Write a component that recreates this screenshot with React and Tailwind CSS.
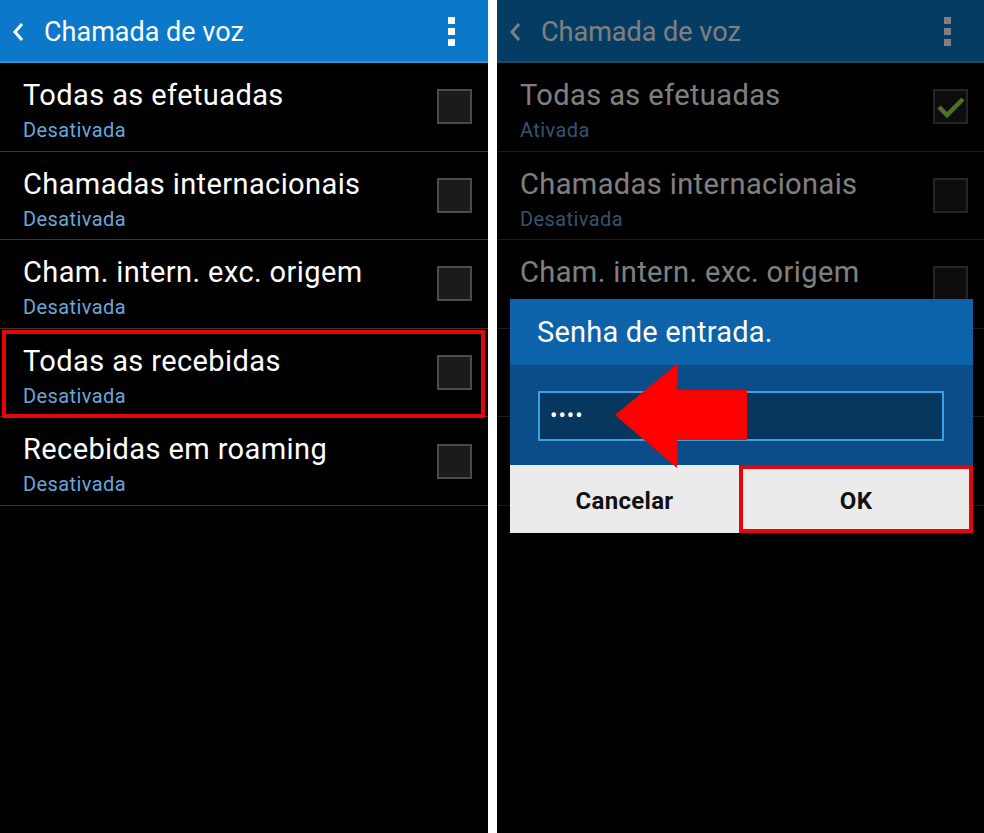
import React from 'react';

const rows = [
    { title: 'Todas as efetuadas', status: 'Desativada' },
    { title: 'Chamadas internacionais', status: 'Desativada' },
    { title: 'Cham. intern. exc. origem', status: 'Desativada' },
    { title: 'Todas as recebidas', status: 'Desativada' },
    { title: 'Recebidas em roaming', status: 'Desativada' },
];

function Header() {
    return (
        <div className="h-[63px] flex items-center justify-between bg-[#0b78c9] border-b-2 border-[#3591d6]">
            <div className="flex items-center">
                <svg width="14" height="20" viewBox="0 0 14 20" className="ml-[12px] mr-[18px] mt-[2px]">
                    <polyline points="10,2 3,10 10,18" fill="none" stroke="#fff" strokeWidth="3" />
                </svg>
                <span className="text-[27px] text-white leading-none mt-[4px]">Chamada de voz</span>
            </div>
            <div className="flex flex-col gap-[4px] mr-[33px] mt-[2px]">
                <div className="w-[7px] h-[7px] bg-white" />
                <div className="w-[7px] h-[7px] bg-white" />
                <div className="w-[7px] h-[7px] bg-white" />
            </div>
        </div>
    );
}

function Checkbox({ checked }) {
    return (
        <div className="w-[35px] h-[35px] border-2 border-[#4b4b4b] bg-[#1b1b1b] flex items-center justify-center">
            {checked && (
                <svg width="30" height="24" viewBox="0 0 30 24">
                    <polyline points="3,12 11,20 27,4" fill="none" stroke="#9ee04a" strokeWidth="4.5" />
                </svg>
            )}
        </div>
    );
}

function Row({ title, status, checked, highlight }) {
    return (
        <div className="relative h-[88.6px] border-b border-[#353535] flex justify-between items-center pl-[23px] pr-[16px]">
            <div className="self-start pt-[17px]">
                <div className="text-[29px] leading-[30px] tracking-[0.4px] text-white">{title}</div>
                <div className="text-[20px] leading-[24px] tracking-[0.4px] mt-[8px] text-[#6aa6da]">{status}</div>
            </div>
            <Checkbox checked={checked} />
            {highlight && (
                <div className="absolute left-[2px] right-[3px] top-[1px] bottom-[-2px] border-4 border-[#e5060a]" />
            )}
        </div>
    );
}

function Dialog() {
    return (
        <div className="absolute left-[13px] top-[299px] w-[463px] h-[234px] flex flex-col">
            <div className="h-[66px] bg-[#0d63a9] flex items-center pl-[27px]">
                <span className="text-[29px] tracking-[0.2px] text-white leading-none">Senha de entrada.</span>
            </div>
            <div className="h-[100px] bg-[#0b4d88] pl-[28px] pt-[26px]">
                <div className="w-[406px] h-[50px] bg-[#07365f] border-2 border-[#3d9fe2] flex items-center pl-[10px]">
                    <span className="text-white text-[22px] leading-none tracking-[1px]">••••</span>
                </div>
            </div>
            <div className="h-[68px] flex bg-[#ebebeb]">
                <div className="w-[229px] flex items-center justify-center pt-[4px]">
                    <span className="text-[24px] tracking-[0.3px] font-bold text-[#111]">Cancelar</span>
                </div>
                <div className="flex-1 flex items-center justify-center border-4 border-[#e5060a] pt-[4px]">
                    <span className="text-[24px] tracking-[0.3px] font-bold text-[#111]">OK</span>
                </div>
            </div>
        </div>
    );
}

export default function App() {
    return (
        <div className="w-[984px] h-[833px] flex bg-black overflow-hidden" style={{ fontFamily: 'Roboto, "Noto Sans", sans-serif' }}>
            <div className="w-[488px] h-full bg-black">
                <Header />
                {rows.map((r, i) => (
                    <Row key={i} title={r.title} status={r.status} highlight={i === 3} />
                ))}
            </div>
            <div className="w-[9px] h-full bg-white" />
            <div className="relative flex-1 h-full bg-black">
                <Header />
                {rows.map((r, i) => (
                    <Row
                        key={i}
                        title={r.title}
                        status={i === 0 ? 'Ativada' : r.status}
                        checked={i === 0}
                    />
                ))}
                <div className="absolute inset-0 bg-black/50" />
                <Dialog />
                <svg className="absolute left-[118px] top-[364px]" width="133" height="105" viewBox="0 0 133 105">
                    <polygon points="0,51 62,0 62,26 132,26 132,76 62,76 62,104" fill="#ff0000" />
                </svg>
            </div>
        </div>
    );
}
